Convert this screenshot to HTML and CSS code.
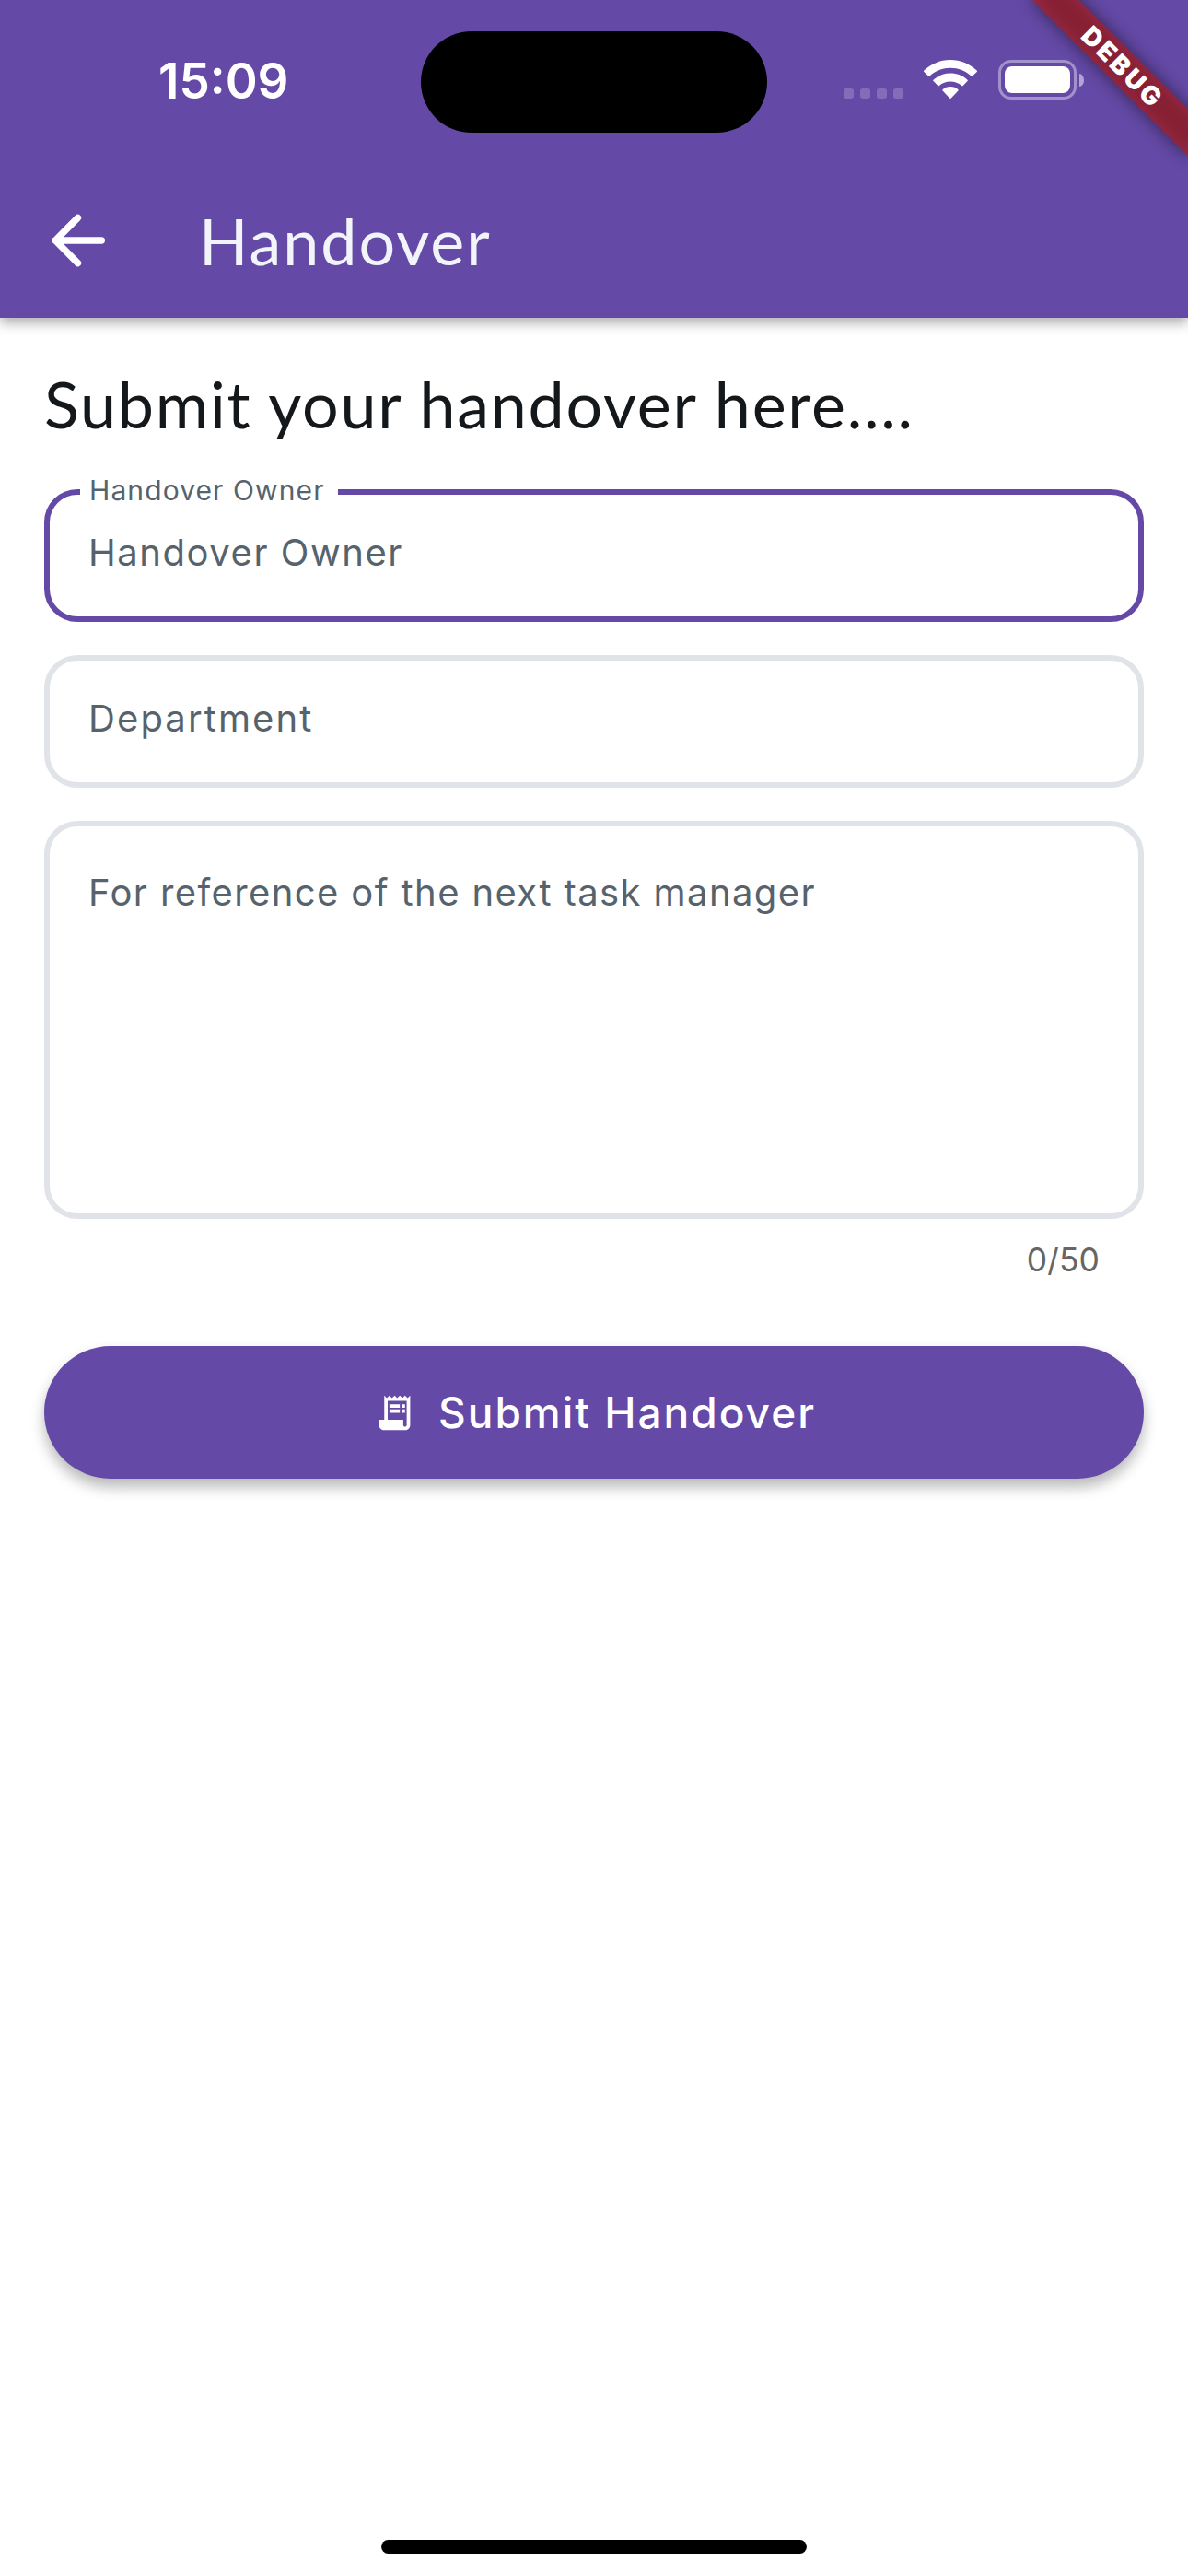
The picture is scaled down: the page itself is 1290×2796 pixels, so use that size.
FILE: index.html
```html
<!DOCTYPE html>
<html lang="en">
<head>
<meta charset="utf-8">
<title>Handover</title>
<link rel="stylesheet" href="styles.css">
</head>
<body>
<div class="screen">
  <header class="header">
    <div class="status">
      <div class="time">15:09</div>
      <div class="island"></div>
      <div class="indicators">
        <div class="signal"><i></i><i></i><i></i><i></i></div>
        <svg class="wifi" viewBox="0 0 58 43" width="58" height="43" fill="#fff">
          <path d="M29 0C40 0 50 4.300 57.700 11.500Q58.400 12.300 57.700 13L53 17.600Q52.300 18.200 51.500 17.500C45.500 12 37.500 8.800 29 8.800S12.500 12 6.500 17.500Q5.700 18.200 5 17.600L.300 13Q-.400 12.300 .300 11.500C8 4.300 18 0 29 0Z"/>
          <path d="M29 14.600C36 14.600 42.500 17.200 47.500 21.700Q48.200 22.400 47.500 23.100L42.700 27.900Q42 28.500 41.200 27.900C38 25 33.700 23.400 29 23.400S20 25 16.800 27.900Q16 28.500 15.300 27.900L10.500 23.100Q9.800 22.400 10.500 21.700C15.500 17.200 22 14.600 29 14.600Z"/>
          <path d="M29 29C32.300 29 35.200 30.200 37.400 32.200Q38.100 32.900 37.400 33.600L29.800 41.500Q29 42.300 28.200 41.500L20.600 33.600Q19.900 32.900 20.600 32.200C22.800 30.200 25.700 29 29 29Z"/>
        </svg>
        <div class="battery"><div class="cell"><b></b></div><div class="nub"></div></div>
      </div>
    </div>
    <div class="appbar">
      <svg class="back" viewBox="0 0 60 60" width="60" height="60" fill="none" stroke="#fff" stroke-width="7.400" stroke-linecap="round" stroke-linejoin="round"><path d="M55.300 30H5.200M29.500 5.300L5.200 30L29.500 54.700"/></svg>
      <div class="title">Handover</div>
    </div>
  </header>
  <main class="content">
    <h1 class="heading">Submit your handover here....</h1>
    <div class="fields">
      <div class="field focused"><label class="float">Handover Owner</label><span class="t-owner">Handover Owner</span></div>
      <div class="field"><span class="t-dept">Department</span></div>
      <div class="field area"><span class="t-ref">For reference of the next task manager</span></div>
    </div>
    <div class="counter">0/50</div>
    <button class="submit">
      <svg viewBox="0 0 24 24" width="45" height="45" fill="#fff"><path d="M19.500 3.500L18 2l-1.500 1.500L15 2l-1.500 1.500L12 2l-1.500 1.500L9 2 7.500 3.500 6 2v14H3v3c0 1.660 1.340 3 3 3h12c1.660 0 3-1.340 3-3V2l-1.500 1.500zM19 19c0 .550-.450 1-1 1s-1-.450-1-1v-3H8V5h11v14z"/><path d="M9 7h6v2H9zM16 7h2v2h-2zM9 10h6v2H9zM16 10h2v2h-2z"/></svg>
      <span>Submit Handover</span>
    </button>
  </main>
  <div class="home"></div>
  <div class="banner"><span>DEBUG</span></div>
</div>
</body>
</html>
```
FILE: styles.css
```css
* { box-sizing: border-box; }
body { margin: 0; background: #fff; }

.screen {
  position: relative;
  width: 1290px;
  height: 2796px;
  overflow: hidden;
  display: flex;
  flex-direction: column;
  background: #fff;
  font-family: Inter, sans-serif;
}

/* Header: status bar and app bar */
.header {
  height: 345px;
  background: #6449a7;
  box-shadow: 0 6px 12px rgba(0, 0, 0, .3);
}
.status {
  height: 177px;
  display: grid;
  grid-template-columns: 457px 376px 457px;
}
.time {
  padding: 57px 0 0 172px;
  font-size: 53px;
  line-height: 62px;
  font-weight: 600;
  color: #fff;
}
.island {
  margin-top: 34px;
  height: 110px;
  border-radius: 55px;
  background: #000;
}
.indicators {
  display: flex;
  align-items: flex-start;
  padding: 65px 0 0 83px;
}
.signal { display: flex; gap: 7px; margin: 31px 22px 0 0; }
.signal i { width: 11px; height: 11px; border-radius: 3px; background: rgba(255, 255, 255, .2); }
.battery { display: flex; align-items: center; gap: 3px; margin-left: 23px; }
.cell {
  width: 85px;
  height: 43px;
  padding: 4px;
  border: 3px solid rgba(255, 255, 255, .4);
  border-radius: 14px;
}
.cell b { display: block; height: 29px; border-radius: 8px; background: #fff; }
.nub { width: 5px; height: 14px; border-radius: 0 5px 5px 0 / 0 7px 7px 0; background: rgba(255, 255, 255, .5); }

.appbar {
  height: 168px;
  display: flex;
  align-items: center;
  padding: 0 0 0 55px;
}
.back { flex: none; }
.title {
  margin: 0 0 0 101px;
  font-family: Lato, sans-serif;
  font-size: 70px;
  line-height: 84px;
  letter-spacing: 2px;
  color: #f1f4f8;
}

/* Form */
.content {
  flex: 1;
  display: flex;
  flex-direction: column;
  padding: 51px 48px 0;
}
.heading {
  margin: 0 0 51px;
  font-family: Lato, sans-serif;
  font-size: 70px;
  line-height: 84px;
  font-weight: 400;
  letter-spacing: 1.72px;
  white-space: nowrap;
  color: #14181b;
}
.fields { display: flex; flex-direction: column; gap: 36px; }
.field {
  position: relative;
  height: 144px;
  padding: 38px 42px;
  border: 6px solid #e0e3e7;
  border-radius: 36px;
  font-size: 40px;
  line-height: 50px;
  white-space: nowrap;
  color: #57636c;
}
.focused { border-color: #6449a7; }
.area { height: 432px; padding-top: 47px; }
.t-owner { letter-spacing: 1.55px; }
.t-dept { letter-spacing: 2.1px; }
.t-ref { letter-spacing: 1.4px; }
.float {
  position: absolute;
  left: 33px;
  top: -23px;
  width: 280px;
  padding-left: 10px;
  background: #fff;
  font-size: 30px;
  line-height: 36px;
  letter-spacing: 1.1px;
}
.counter {
  margin: 23px 48px 71px 0;
  font-size: 35.5px;
  line-height: 44px;
  text-align: right;
  color: #666;
}
.submit {
  height: 144px;
  display: flex;
  align-items: center;
  gap: 25px;
  padding: 0 0 0 358px;
  border: 0;
  border-radius: 72px;
  background: #6449a7;
  box-shadow: 0 9px 15px rgba(0, 0, 0, .28);
  font-family: Inter, sans-serif;
  font-size: 46px;
  font-weight: 500;
  letter-spacing: 2px;
  color: #fff;
  white-space: nowrap;
}

.home {
  align-self: center;
  width: 462px;
  height: 15px;
  margin-bottom: 24px;
  border-radius: 8px;
  background: #000;
}

/* Corner ribbon */
.banner {
  position: absolute;
  left: 1098px;
  top: 54px;
  width: 240px;
  height: 36px;
  transform: rotate(45deg);
}
.banner::before, .banner::after { content: ""; position: absolute; inset: 0; }
.banner::before { background: rgba(0, 0, 0, .5); filter: blur(10px); }
.banner::after { background: rgba(183, 28, 28, .63); }
.banner span {
  position: absolute;
  inset: 0;
  z-index: 1;
  padding-left: 3px;
  font-size: 28px;
  line-height: 36px;
  font-weight: 900;
  letter-spacing: 3px;
  text-align: center;
  color: #fff;
}
```
